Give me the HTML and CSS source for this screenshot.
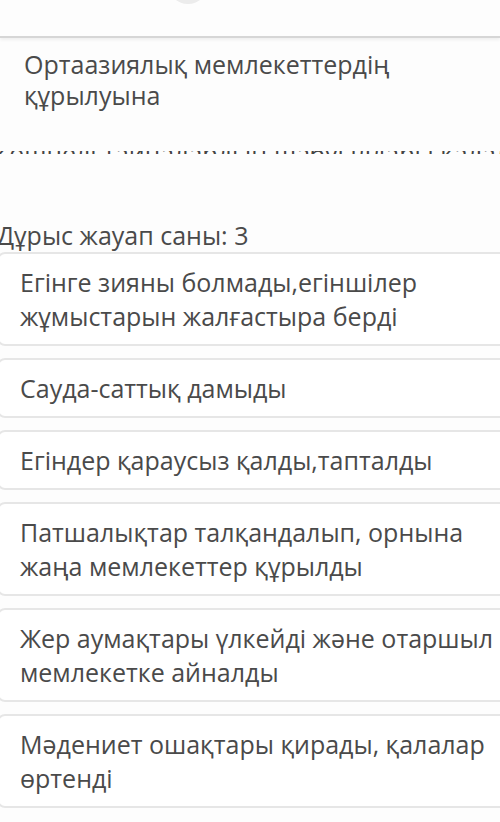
FILE: index.html
```html
<!DOCTYPE html>
<html lang="kk">
<head>
    <meta charset="UTF-8">
    <meta name="viewport" content="width=device-width, initial-scale=1.0">
    <title>Тест</title>
    <link rel="stylesheet" href="styles.css">
</head>
<body>
    <div class="topbar">
        <div class="avatar"></div>
    </div>

    <div class="question">
        <p>Ортаазиялық мемлекеттердің құрылуына</p>
    </div>

    <div class="cut_line">
        <span>Көшпелі тайпалардың шабуылдары қалаларды қиратты. Тайпалардың шабуылдары елді әлсіретті</span>
    </div>

    <div class="answers">
        <div class="count">Дұрыс жауап саны: 3</div>
        <div class="option">Егінге зияны болмады,егіншілер жұмыстарын жалғастыра берді</div>
        <div class="option">Сауда-саттық дамыды</div>
        <div class="option">Егіндер қараусыз қалды,тапталды</div>
        <div class="option">Патшалықтар талқандалып, орнына жаңа мемлекеттер құрылды</div>
        <div class="option">Жер аумақтары үлкейді және отаршыл мемлекетке айналды</div>
        <div class="option">Мәдениет ошақтары қирады, қалалар өртенді</div>
    </div>
</body>
</html>
```

FILE: styles.css
```css
body {
    font-family: "Open Sans", "Noto Sans", sans-serif;
    margin: 0;
    padding: 0;
    background-color: #fdfdfd;
    color: #4a4a4a;
    overflow: hidden;
}
.topbar {
    display: flex;
    height: 36px;
    border-bottom: 2px solid #d6d6d6;
    box-shadow: 0 2px 3px rgba(0, 0, 0, 0.06);
    padding-left: 168px;
}
.avatar {
    width: 40px;
    height: 40px;
    margin-top: -36px;
    border-radius: 50%;
    background-color: #ececec;
}
.question {
    padding: 11px 24px 0 24px;
}
.question p {
    margin: 0;
    font-size: 25px;
    line-height: 31px;
    width: 400px;
}
.cut_line {
    height: 3px;
    overflow: hidden;
    margin-top: 40px;
    white-space: nowrap;
    margin-left: -6px;
}
.cut_line span {
    display: block;
    font-size: 25px;
    line-height: 34px;
    margin-top: -15px;
    color: #444;
}
.answers {
    margin-top: 66px;
    margin-left: -3px;
    margin-right: -12px;
}
.count {
    font-size: 25px;
    line-height: 30px;
    margin-left: 0;
    margin-bottom: 2px;
}
.option {
    border: 2px solid #e6e6e6;
    border-radius: 8px;
    background-color: #fff;
    padding: 11px 8px 11px 21px;
    font-size: 25px;
    line-height: 34px;
    margin-bottom: 12px;
}
```
